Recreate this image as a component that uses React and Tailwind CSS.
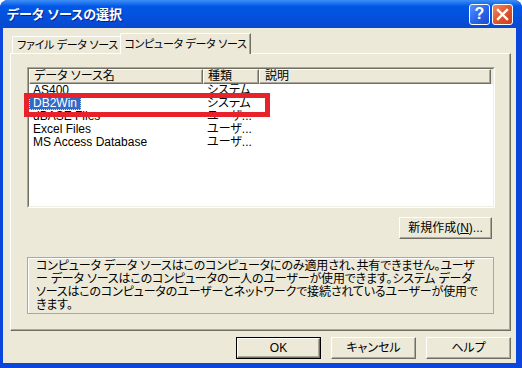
const rows = [
  { name: 'AS400', kind: 'システム' },
  { name: 'DB2Win', kind: 'システム', selected: true },
  { name: 'dBASE Files', kind: 'ユーザ...' },
  { name: 'Excel Files', kind: 'ユーザ...' },
  { name: 'MS Access Database', kind: 'ユーザ...' },
];

function CaptionButton({ children, red }) {
  return (
    <div
      className={`w-[21px] h-[21px] rounded-[3px] border border-white flex items-center justify-center ${
        red
          ? 'bg-gradient-to-br from-[#F08A64] via-[#E0562C] to-[#C5421D]'
          : 'bg-gradient-to-br from-[#5A92F8] via-[#2A66EC] to-[#1A4CD0]'
      }`}
    >
      {children}
    </div>
  );
}

function Button({ children, primary, className = '' }) {
  return (
    <button
      className={`h-[22px] bg-[#ECE9D8] text-[12px] text-black flex items-center justify-center ${
        primary ? 'border border-black' : ''
      } ${className}`}
    >
      <span className="w-full h-full flex items-center justify-center border border-t-white border-l-white border-r-[#716F64] border-b-[#716F64] shadow-[inset_-1px_-1px_0_#ACA899]">
        {children}
      </span>
    </button>
  );
}

export default function App() {
  return (
    <div className="relative w-[522px] h-[368px] flex flex-col bg-[#0A46DB] rounded-t-[8px] overflow-hidden text-[12px] text-black font-['Liberation_Sans','Noto_Sans_CJK_JP',sans-serif] [font-feature-settings:'palt']">
      {/* title bar */}
      <div className="h-[28px] shrink-0 flex items-center pl-[7px] pr-[9px] bg-gradient-to-b from-[#3D8EF7] via-[#0058E6] via-[22%] to-[#0848D0]">
        <span className="text-white font-bold text-[13px] leading-none [text-shadow:1px_1px_0_#0A1F8A]">
          データ ソースの選択
        </span>
        <div className="ml-auto flex gap-[2px]">
          <CaptionButton>
            <span className="text-white font-bold text-[16px] leading-none font-['Liberation_Sans',sans-serif]">?</span>
          </CaptionButton>
          <CaptionButton red>
            <svg width="13" height="13" viewBox="0 0 13 13">
              <path d="M2 2 L11 11 M11 2 L2 11" stroke="white" strokeWidth="2.4" strokeLinecap="square" />
            </svg>
          </CaptionButton>
        </div>
      </div>

      {/* client area */}
      <div className="flex-1 ml-[3px] mr-[6px] mb-[5px] bg-[#ECE9D8] flex flex-col pl-[7px] pr-[5px] pt-[5px] pb-[4px]">
        {/* tabs */}
        <div className="relative z-10 flex items-end h-[20px] pl-[2px] text-[11px] tracking-[-0.3px]">
          <div className="w-[110px] h-[17px] -mr-[2px] flex items-center justify-center border-t border-l border-white rounded-tl-[2px] whitespace-nowrap overflow-hidden">
            ファイル データ ソース
          </div>
          <div className="w-[131px] h-[21px] -mb-px bg-[#ECE9D8] flex items-center justify-center border-t border-l border-white border-r border-r-[#716F64] shadow-[inset_-1px_0_0_#ACA899] rounded-tl-[2px] whitespace-nowrap overflow-hidden">
            コンピュータ データ ソース
          </div>
        </div>

        {/* tab panel */}
        <div className="h-[278px] flex flex-col border border-t-white border-l-white border-r-[#716F64] border-b-[#716F64] shadow-[inset_-1px_-1px_0_#ACA899] pl-[16px] pr-[15px] pt-[13px]">
          {/* list view */}
          <div className="h-[141px] border border-t-[#ACA899] border-l-[#ACA899] border-r-white border-b-white">
            <div className="h-full bg-white border border-t-[#716F64] border-l-[#716F64] border-r-[#F1EFE2] border-b-[#F1EFE2] flex flex-col">
              <div className="h-[15px] flex bg-[#ECE9D8] leading-[13px]">
                <div className="w-[174px] pl-[4px] border border-t-white border-l-white border-r-[#716F64] border-b-[#716F64] shadow-[inset_-1px_-1px_0_#ACA899] whitespace-nowrap">
                  データ ソース名
                </div>
                <div className="w-[56px] pl-[4px] border border-t-white border-l-white border-r-[#716F64] border-b-[#716F64] shadow-[inset_-1px_-1px_0_#ACA899]">
                  種類
                </div>
                <div className="w-[232px] pl-[5px] border border-t-white border-l-white border-r-[#716F64] border-b-[#716F64] shadow-[inset_-1px_-1px_0_#ACA899]">
                  説明
                </div>
                <div className="flex-1" />
              </div>
              {rows.map((row) => (
                <div key={row.name} className="h-[13px] flex leading-[11px]">
                  <div className="w-[174px] flex">
                    <span
                      className={`px-[3px] border whitespace-nowrap ${
                        row.selected
                          ? 'bg-[#316AC5] text-white border-dotted border-[#E6E29A]'
                          : 'border-transparent'
                      }`}
                    >
                      {row.name}
                    </span>
                  </div>
                  <div className="w-[56px] pl-[4px] pt-px leading-[11px] whitespace-nowrap overflow-hidden">
                    {row.kind}
                  </div>
                </div>
              ))}
            </div>
          </div>

          {/* new button */}
          <div className="flex justify-end mt-[9px] mr-[3px]">
            <Button className="w-[93px]">
              新規作成(<span className="underline">N</span>)...
            </Button>
          </div>

          {/* description */}
          <div className="mt-[18px] w-[467px] h-[57px] border border-[#ACA899] shadow-[inset_1px_1px_0_#fff] pl-[8px] pt-[2px] leading-[13px] whitespace-nowrap tracking-[-0.15px]">
            コンピュータ データ ソースはこのコンピュータにのみ適用され、共有できません。ユーザ
            <br />
            ー データ ソースはこのコンピュータの一人のユーザーが使用できます。システム データ
            <br />
            ソースはこのコンピュータのユーザーとネットワークで接続されているユーザーが使用で
            <br />
            きます。
          </div>
        </div>

        {/* bottom buttons */}
        <div className="mt-[6px] flex justify-end gap-[10px]">
          <Button primary className="w-[85px]">OK</Button>
          <Button className="w-[85px]">キャンセル</Button>
          <Button className="w-[85px]">ヘルプ</Button>
        </div>
      </div>

      {/* red annotation box */}
      <div className="absolute left-[24px] top-[93px] w-[246px] h-[24px] border-[5px] border-[#E8222A]" />
    </div>
  );
}
